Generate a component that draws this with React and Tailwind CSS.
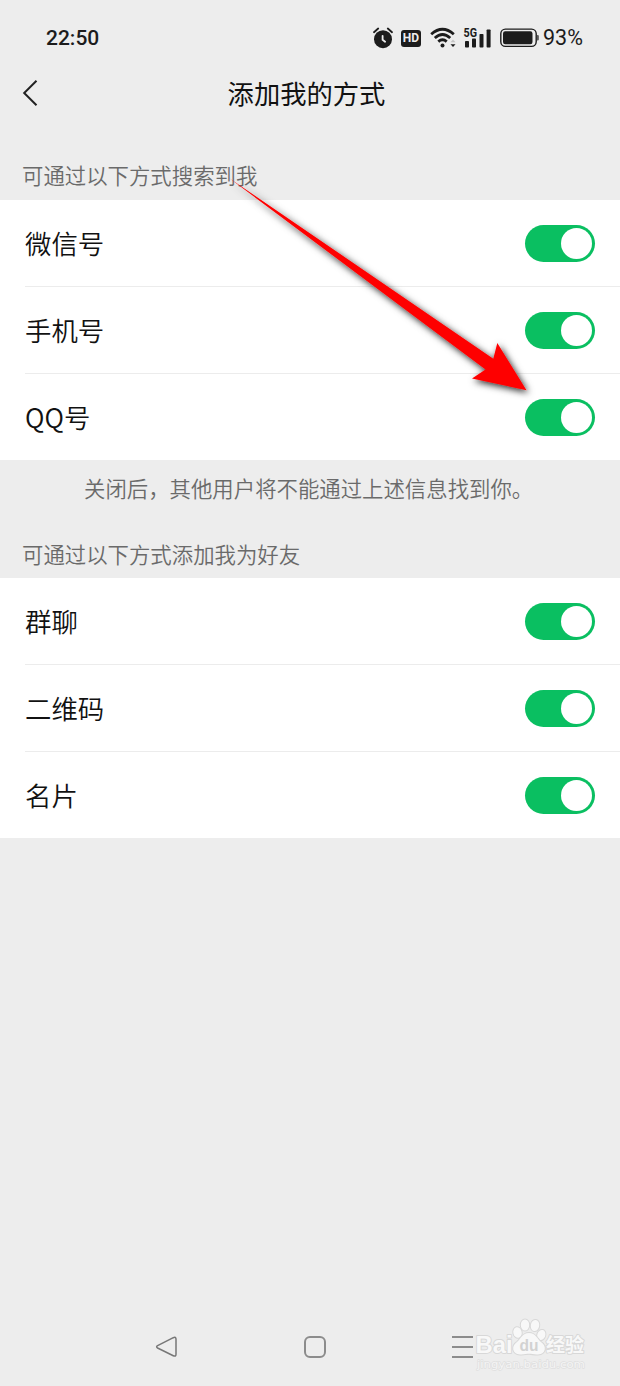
import React, { useState } from 'react';

const sections = [
  {
    title: '可通过以下方式搜索到我',
    items: ['微信号', '手机号', 'QQ号'],
    note: '关闭后，其他用户将不能通过上述信息找到你。',
  },
  {
    title: '可通过以下方式添加我为好友',
    items: ['群聊', '二维码', '名片'],
  },
];

const StatusBar = () => (
  <div className="flex h-[60px] items-center justify-between pl-[46px] pr-[37px] pt-[16px] font-['Roboto',sans-serif] text-[#1c1c1c]">
    <span className="w-[56px] text-[21px] font-medium leading-[44px] whitespace-nowrap">22:50</span>
    <div className="flex items-center">
      {/* Alarm */}
      <svg width="20" height="22" viewBox="0 0 20 22" className="mr-2">
        <circle cx="10" cy="12.2" r="9" fill="#1c1c1c" />
        <path d="M1 5.2 5.2 1.5M19 5.2 14.8 1.5" stroke="#1c1c1c" strokeWidth="1.8" strokeLinecap="round" />
        <path d="M9.6 8.8v4l2.5 2" fill="none" stroke="#ededed" strokeWidth="1.8" strokeLinecap="round" />
      </svg>
      {/* HD */}
      <span className="mr-[9px] flex h-[17px] w-[20px] items-center justify-center rounded-[3px] bg-[#1c1c1c] text-[12px] leading-none font-bold text-[#ededed]">
        HD
      </span>
      {/* Wifi */}
      <svg width="27" height="22" viewBox="0 0 27 22" className="mr-[6px]">
        <g fill="none" stroke="#1c1c1c" strokeWidth="2.8">
          <path d="M1.2 7.2Q12.5 -2.8 23.8 7.2" />
          <path d="M4.8 11Q12.5 4 20.2 11" />
          <path d="M8.3 14.6Q12.5 10.8 16.7 14.6" />
        </g>
        <circle cx="12.500" cy="18.600" r="2" fill="#1c1c1c" />
        <path d="M20.500 15.200h5L23 12.500z" fill="#c4c4c4" />
        <path d="M20.500 17.200h5L23 20z" fill="#1c1c1c" />
      </svg>
      {/* Mobile signal */}
      <svg width="29" height="22" viewBox="0 0 29 22" className="mr-2 overflow-visible">
        <text x="0.500" y="10" fill="#1c1c1c" fontSize="12" fontWeight="700" textLength="13.500" lengthAdjust="spacingAndGlyphs">5G</text>
        <g fill="#1c1c1c">
          <rect x="2" y="14" width="4" height="6.500" rx="0.8" />
          <rect x="9" y="11.500" width="4" height="9" rx="0.8" />
          <rect x="16.500" y="7" width="4" height="13.500" rx="0.8" />
          <rect x="23.600" y="2.500" width="4" height="18" rx="0.8" />
        </g>
      </svg>
      {/* Battery */}
      <svg width="39" height="20" viewBox="0 0 39 20" className="mr-[4px]">
        <rect x="0.8" y="1.1" width="35.4" height="17.3" rx="4.6" fill="none" stroke="#1c1c1c" strokeWidth="1.4" />
        <rect x="3" y="3.3" width="29.5" height="13" rx="2.2" fill="#1c1c1c" />
        <path d="M37.3 7h.3q1 0 1 1v3.6q0 1-1 1h-.3z" fill="#1c1c1c" />
      </svg>
      <span className="w-[40px] text-[21.5px] leading-[44px] whitespace-nowrap">93%</span>
    </div>
  </div>
);

const Toggle = ({ checked, onChange }) => (
  <button
    type="button"
    role="switch"
    aria-checked={checked}
    onClick={onChange}
    className={`flex h-[37px] w-[70px] items-center rounded-full px-[3px] ${
      checked ? 'justify-end bg-[#0abf61]' : 'justify-start bg-gray-300'
    }`}
  >
    <span className="size-[31px] rounded-full bg-white" />
  </button>
);

const Row = ({ label, last }) => {
  const [on, setOn] = useState(true);

  return (
    <div className="pl-[25px]">
      <div
        className={`flex items-center justify-between pr-[25px] ${
          last ? 'h-[86px]' : 'h-[87px] border-b border-[#ececec]'
        }`}
      >
        <span className="text-[26.4px] leading-[40px] font-[350] text-[#111]">{label}</span>
        <Toggle checked={on} onChange={() => setOn(!on)} />
      </div>
    </div>
  );
};

// Red pointer that leads to the last switch of the first group
const Arrow = () => (
  <svg width="320" height="240" viewBox="220 170 320 240" className="pointer-events-none absolute top-[170px] left-[220px]">
    <defs>
      <filter id="arrowShadow" x="-10%" y="-10%" width="120%" height="125%">
        <feDropShadow dx="2" dy="2.5" stdDeviation="3.5" floodColor="#000" floodOpacity="0.85" />
      </filter>
    </defs>
    <path
      d="M229 178 493.3 358.7 497.3 343 526.5 390.2 472 378.5 485.5 369.5Z"
      fill="#fe0000"
      filter="url(#arrowShadow)"
    />
  </svg>
);

const Watermark = () => (
  <svg width="116" height="56" viewBox="0 0 116 56" className="pointer-events-none absolute top-[1316px] left-[473px]">
    <g fill="#f8f8f8" stroke="#d8d8d8" strokeWidth="2" paintOrder="stroke" strokeLinejoin="round">
      <text x="2.500" y="37" fontFamily="Liberation Sans" fontWeight="700" fontSize="24.500" textLength="37" lengthAdjust="spacingAndGlyphs">Bai</text>
      <ellipse cx="44.500" cy="16.500" rx="4.2" ry="5.4" transform="rotate(-12 44.500 16.500)" />
      <ellipse cx="52" cy="9" rx="4.2" ry="5.6" />
      <ellipse cx="62" cy="9.500" rx="4.2" ry="5.6" transform="rotate(10 62 9.500)" />
      <ellipse cx="68.300" cy="19" rx="4" ry="5.2" transform="rotate(18 68.300 19)" />
      <path d="M56 17C49 17 48 23 44 26C38 30 39 38 47 38.500C52 38.700 53 37.800 56 37.800C59 37.800 61 38.700 65 38.500C73 38 74 30 68 26C64 23 63 17 56 17Z" />
      <text x="73" y="36" fontFamily="Noto Sans CJK SC" fontWeight="700" fontSize="19" textLength="38" lengthAdjust="spacingAndGlyphs">经验</text>
      <text x="4" y="51.500" fontFamily="DejaVu Sans" fontSize="11" strokeWidth="1.400" stroke="#dfdfdf" fill="#f4f4f4" textLength="108" lengthAdjust="spacingAndGlyphs">jingyan.baidu.com</text>
    </g>
    <text x="46.500" y="35" fill="#d2d2d2" fontFamily="Liberation Sans" fontWeight="700" fontSize="17" textLength="19" lengthAdjust="spacingAndGlyphs">du</text>
  </svg>
);

const NavBar = () => (
  <div className="mt-auto flex h-[78px] items-center pl-[155px]">
    <svg width="23" height="24" viewBox="0 0 23 24" fill="none" stroke="#777" strokeWidth="1.5" strokeLinejoin="round" className="mr-[126px]">
      <path d="M2.600 10.600 18.300 2.700Q21 1.600 21 4.200V19.200Q21 22 18.300 20.700L2.600 13Q.7 11.800 2.600 10.600Z" />
    </svg>
    <span className="mr-[126px] size-[22px] rounded-[6px] border-2 border-[#8c8c8c]" />
    <div className="flex w-[21px] flex-col gap-[8px]">
      <span className="h-[2px] bg-[#8c8c8c]" />
      <span className="h-[2px] bg-[#8c8c8c]" />
      <span className="h-[2px] bg-[#8c8c8c]" />
    </div>
  </div>
);

const App = () => {
  return (
    <div className="relative flex h-[1386px] w-[620px] flex-col overflow-hidden bg-[#ededed] font-['Noto_Sans_CJK_SC',sans-serif]">
      <StatusBar />

      {/* Header */}
      <div className="grid h-[66px] grid-cols-[60px_1fr_67px] items-center">
        <svg width="16" height="28" viewBox="0 0 16 28" fill="none" stroke="#222" strokeWidth="2" className="ml-[22px]">
          <path d="M14.500 1.800 2.200 14 14.500 26.200" />
        </svg>
        <h1 className="text-center text-[26.3px] leading-[40px] font-normal text-[#111]">添加我的方式</h1>
      </div>

      {sections.map((section, index) => (
        <section key={section.title}>
          <h2
            className={`pl-[22px] text-[21.4px] leading-[32px] font-[350] text-[#6a6a6a] ${
              index === 0 ? 'pt-[33px] pb-[9px]' : 'pt-[20px] pb-[8px]'
            }`}
          >
            {section.title}
          </h2>
          <div className="bg-white">
            {section.items.map((item, i) => (
              <Row key={item} label={item} last={i === section.items.length - 1} />
            ))}
          </div>
          {section.note && (
            <p className="pt-[12px] pb-[14px] pl-[84px] text-[21.4px] leading-[32px] font-[350] whitespace-nowrap text-[#6a6a6a]">
              {section.note}
            </p>
          )}
        </section>
      ))}

      <NavBar />
      <Arrow />
      <Watermark />
    </div>
  );
};

export default App;
